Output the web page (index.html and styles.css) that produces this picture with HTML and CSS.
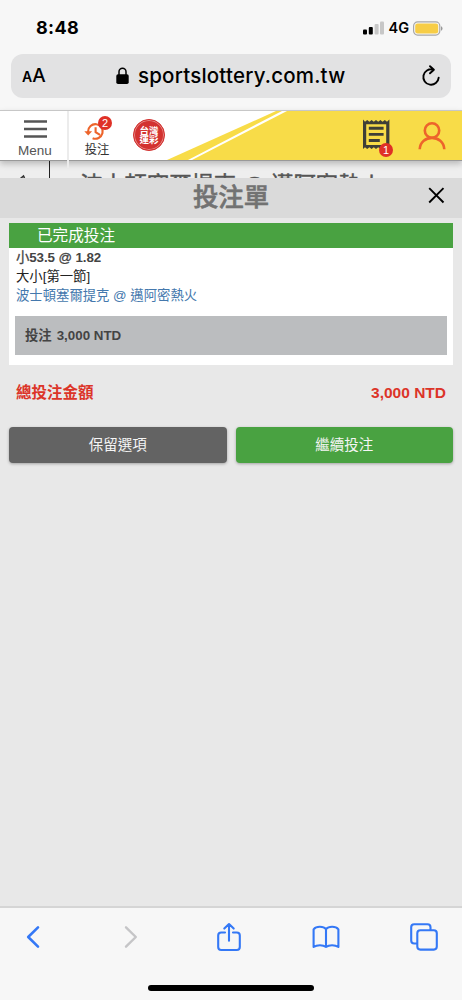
FILE: index.html
```html
<!DOCTYPE html>
<html lang="zh-Hant">
<head>
<meta charset="utf-8">
<meta name="viewport" content="width=device-width, initial-scale=1">
<title>投注單</title>
<link rel="stylesheet" href="styles.css">
</head>
<body>
<div class="status">
  <span class="time">8:48</span>
  <div class="status-right">
    <svg class="signal" width="21" height="14" viewBox="0 0 21 14"><rect x="0" y="8.5" width="4" height="5" rx="1"/><rect x="5.8" y="6" width="4" height="7.5" rx="1"/><rect x="11.6" y="3" width="4" height="10.5" rx="1" fill="#c7c7c7"/><rect x="17" y="0.5" width="4" height="13" rx="1" fill="#c7c7c7"/></svg>
    <span class="network">4G</span>
    <svg class="battery" width="30" height="15" viewBox="0 0 30 15"><rect x=".6" y=".9" width="26.2" height="13.2" rx="4" fill="none" stroke="#a8a8a8" stroke-width="1.2"/><rect x="2.2" y="2.4" width="23" height="10.2" rx="2.4" fill="#f7cd46"/><path d="M28 5.2q1.5 .6 1.5 2.3T28 9.8z" fill="#999"/></svg>
  </div>
</div>
<div class="address">
  <div class="reader"><span class="small-a">A</span><span class="big-a">A</span></div>
  <div class="host">
    <svg width="13" height="18" viewBox="0 0 13 18"><rect x=".3" y="7.3" width="12.4" height="9.7" rx="1.7"/><path d="M3 8V4.8a3.5 3.5 0 0 1 7 0V8" fill="none" stroke="#000" stroke-width="1.5"/></svg>
    <span>sportslottery.com.tw</span>
  </div>
  <svg class="reload" width="20" height="24" viewBox="0 0 20 24" fill="none" stroke="#000" stroke-width="1.9" stroke-linecap="round" stroke-linejoin="round"><path d="M12 5.6A7.7 7.7 0 1 0 17.7 13.7M9 2.2l3.9 3.5L9 9.3"/></svg>
</div>
<header class="site-header">
  <svg class="banner" width="295" height="49" viewBox="0 0 295 49"><path d="M0 49L109 0H295V49z" fill="#f8dc48"/><path d="M21 49L115 0H120L25 49z" fill="#fff"/></svg>
  <div class="menu">
    <svg width="23" height="18" viewBox="0 0 23 18"><path d="M0 1.5h23M0 9h23M0 16.5h23" stroke="#555" stroke-width="2.5"/></svg>
    <span>Menu</span>
  </div>
  <div class="history">
    <svg width="26" height="22" viewBox="0 0 26 22" fill="none" stroke="#ed642b"><path d="M4.1 12V10.5A7.3 7.3 0 1 1 8.6 17.2M11.6 6.3v4.9l4.4 2.6" stroke-width="2.1"/><path d="M.3 10.3h7.8L4.2 14.6z" fill="#ed642b" stroke="none"/></svg>
    <span class="badge history-badge">2</span>
    <span>投注</span>
  </div>
  <div class="seal"><span>台灣</span><span>運彩</span></div>
  <div class="account">
    <div class="slip">
      <svg width="28" height="32" viewBox="0 0 28 32"><path d="M1 .5L3 2.8 5.2 1 7.4 2.8 9.6 1l2.2 1.8L14 1l2.2 1.8L18.4 1l2.2 1.8L22.8 1 25 2.8 27.4.5V30L25 28.2 22.8 30l-2.2-1.8-2.2 1.8-2.2-1.8L14 30l-2.2-1.8L9.6 30l-2.2-1.8L5.2 30 3 28.2 1 30zM4.2 5.2V26H24.2V5.2z" fill="#3f3f37" fill-rule="evenodd"/><path d="M6.8 9.3h14.8M6.8 15.4h14.8M6.8 21.5h11" stroke="#3f3f37" stroke-width="2.9"/></svg>
      <span class="badge slip-badge">1</span>
    </div>
    <svg width="28" height="28" viewBox="0 0 28 28" fill="none" stroke="#ed642b" stroke-width="2.6"><circle cx="14" cy="8.5" r="7.2"/><path d="M1.7 27.3C2.4 12 25.6 12 26.3 27.3"/></svg>
  </div>
</header>
<div class="match-strip"><svg class="back-tip" width="8" height="6" viewBox="0 0 8 6"><path d="M1 5L4.5 2l1 2" fill="none" stroke="#333" stroke-width="1.6"/></svg><span>波士頓塞爾提克 @ 邁阿密熱火</span></div>
<div class="slip-title">
  <h1>投注單</h1>
  <svg class="close" width="17" height="17" viewBox="0 0 17 17"><path d="M1.2 1.2l14.3 14.3M15.5 1.2L1.2 15.5" stroke="#000" stroke-width="1.9"/></svg>
</div>
<main>
  <section class="bet">
    <div class="done">已完成投注</div>
    <div class="details">
      <p class="odds"><span class="at">小</span>53.5 <span class="at">@</span> 1.82</p>
      <p>大小[第一節]</p>
      <p class="match">波士頓塞爾提克 @ 邁阿密熱火</p>
      <div class="stake"><span>投注</span><span>3,000 NTD</span></div>
    </div>
  </section>
  <div class="total"><span>總投注金額</span><span>3,000 NTD</span></div>
  <div class="actions">
    <button class="keep">保留選項</button>
    <button class="continue">繼續投注</button>
  </div>
</main>
<nav class="toolbar">
  <svg width="28" height="24" viewBox="-7 0 28 24"><path d="M12 2.3L2.2 12 12 21.7" stroke-width="2.6"/></svg>
  <svg width="28" height="24" viewBox="-7 0 28 24"><path class="disabled" d="M2 2.3L11.8 12 2 21.7"/></svg>
  <svg width="28" height="30" viewBox="-2 0 28 30"><path d="M8 10.5H4.2Q1.2 10.5 1.2 13.5V25Q1.2 28 4.2 28H19.8Q22.8 28 22.8 25V13.5Q22.8 10.5 19.8 10.5H16M12 18.8V2.4M7.3 6.6L12 2l4.7 4.6"/></svg>
  <svg width="28" height="24" viewBox="0 0 28 24"><path d="M14 4.2C11.5 1.2 4.5.8 1.6 4.3V22C5 19.6 11 19.6 14 22 17 19.6 23 19.6 26.4 22V4.3C23.5.8 16.5 1.2 14 4.2zM14 4.2V22"/></svg>
  <svg width="28" height="28" viewBox="0 0 28 28"><path d="M7 20.5H4.2Q1.2 20.5 1.2 17.5V4.2Q1.2 1.2 4.2 1.2H17.5Q20.5 1.2 20.5 4.2V7"/><rect x="7.3" y="7.3" width="19.5" height="19.3" rx="3"/></svg>
  <i class="home-bar"></i>
</nav>
</body>
</html>
```
FILE: styles.css
```css
* { box-sizing: border-box; }
body {
  margin: 0;
  width: 462px;
  height: 1000px;
  overflow: hidden;
  display: flex;
  flex-direction: column;
  background: #f7f7f7;
  font-family: "Liberation Sans", "Noto Sans CJK TC", sans-serif;
}
svg { display: block; flex: none; }
p, h1 { margin: 0; }
.status {
  flex: none;
  height: 54px;
  display: flex;
  justify-content: space-between;
  padding: 16px 19px 0 36px;
  font-family: Inter, sans-serif;
  line-height: 24px;
}
.time { font-size: 18px; font-weight: 700; letter-spacing: .4px; }
.status-right { display: flex; height: 24px; align-items: center; }
.network { font-size: 14.5px; font-weight: 600; margin: 0 4px 0 4px; }
.address {
  flex: none;
  position: relative;
  height: 44px;
  margin: 0 11px;
  padding: 0 11px;
  border-radius: 12px;
  background: #e2e2e3;
  display: flex;
  align-items: center;
  justify-content: space-between;
  font-family: Inter, sans-serif;
}
.reader { width: 94px; font-weight: 500; line-height: 44px; }
.small-a { font-size: 14px; font-weight: 600; }
.big-a { font-size: 19px; }
.host { flex: 1; display: flex; align-items: center; gap: 9px; font-size: 20.5px; font-weight: 500; letter-spacing: .2px; line-height: 44px; white-space: nowrap; }
.reload { margin-right: -1px; }
.site-header {
  flex: none;
  position: relative;
  z-index: 1;
  height: 51px;
  margin-top: 12px;
  display: flex;
  background: #fff;
  border-top: 1px solid #c7c7c7;
  border-bottom: 1px solid #999;
  box-shadow: 0 3px 6px rgba(0, 0, 0, .22);
}
.banner { position: absolute; right: 0; top: 0; }
.menu {
  width: 69px;
  height: 57px;
  border-right: 2px solid #ececec;
  display: flex;
  flex-direction: column;
  align-items: center;
  padding: 9px 0 0 3px;
  color: #555;
  font-size: 13.5px;
  line-height: 16px;
  gap: 5px;
}
.history {
  position: relative;
  width: 56px;
  display: flex;
  flex-direction: column;
  align-items: center;
  padding-top: 10px;
  font-size: 12.3px;
  line-height: 14px;
  color: #333;
}
.badge {
  position: absolute;
  width: 14px;
  height: 14px;
  border-radius: 50%;
  background: #df3026;
  color: #fff;
  font-size: 11px;
  line-height: 14px;
  text-align: center;
}
.history-badge { left: 29px; top: 5px; }
.seal {
  width: 32px;
  height: 32px;
  margin: 8px 0 0 8px;
  border-radius: 50%;
  background: #d33230;
  border: 1px solid #d33230;
  box-shadow: inset 0 0 0 1px #e58b88;
  display: flex;
  flex-direction: column;
  align-items: center;
  justify-content: center;
  color: #fff;
  font-size: 9.5px;
  font-weight: 700;
  line-height: 9.5px;
}
.account { position: relative; margin-left: auto; display: flex; gap: 28px; padding: 8px 16px 0 0; }
.account > svg { margin-top: 3px; }
.slip { position: relative; }
.slip-badge { right: -3px; top: 24px; }
.match-strip {
  flex: none;
  height: 17px;
  overflow: hidden;
  position: relative;
  background: #eee;
  padding-left: 49px;
  color: #555;
  font-size: 22.3px;
  line-height: 49px;
  white-space: nowrap;
  -webkit-text-stroke: .5px #555;
}
.match-strip span { display: block; border-left: 1px solid #222; padding-left: 30px; }
.back-tip { position: absolute; left: 19px; bottom: -2px; }
.slip-title {
  flex: none;
  height: 40px;
  display: flex;
  align-items: center;
  justify-content: center;
  position: relative;
  background: #dadada;
}
h1 { font-size: 25.4px; font-weight: 500; color: #727272; line-height: 36px; padding-bottom: 3px; -webkit-text-stroke: .6px #727272; }
.close { position: absolute; right: 17px; top: 9px; }
main { flex: 1; background: #e8e8e8; padding: 5px 9px 0; }
.bet { height: 142px; background: #fff; }
.done { height: 25px; padding-left: 28px; background: #49a241; color: #fff; font-size: 15.6px; line-height: 25px; }
.details { padding: 0 6px; font-size: 13.35px; line-height: 19px; color: #222; }
.details p { padding-left: 1px; }
.details p.odds { font-weight: 700; color: #444; letter-spacing: -.1px; }
.at { font-weight: 400; -webkit-text-stroke: .3px #444; }
.details .match { color: #4478ad; }
.stake {
  height: 39px;
  margin-top: 11px;
  padding-left: 10px;
  display: flex;
  align-items: center;
  gap: 5px;
  background: #bbbdbf;
  color: #444;
  font-weight: 700;
}
.total { display: flex; justify-content: space-between; padding: 17px 7px 0; color: #dc3428; font-size: 15.5px; font-weight: 700; line-height: 22px; }
.actions { display: flex; gap: 9px; margin-top: 23px; }
button {
  flex: 1;
  height: 36px;
  border: 0;
  border-radius: 4px;
  color: #f5f5f5;
  font: 14.5px/36px "Liberation Sans", "Noto Sans CJK TC", sans-serif;
  padding: 0;
  box-shadow: 0 1px 3px rgba(0, 0, 0, .3);
}
.keep { background: #636363; }
.continue { background: #49a241; }
.toolbar {
  flex: none;
  height: 94px;
  position: relative;
  display: flex;
  justify-content: space-between;
  align-items: center;
  padding: 0 24px 34px 19px;
  border-top: 2px solid #d5d5d5;
  background: #f7f7f7;
}
.toolbar svg { fill: none; stroke: #3478f6; stroke-width: 2.1; stroke-linecap: round; stroke-linejoin: round; }
.toolbar .disabled { stroke: #c5c5c7; stroke-width: 2.4; }
.home-bar { position: absolute; left: 148px; bottom: 9px; width: 166px; height: 6px; border-radius: 3px; background: #000; }
```
